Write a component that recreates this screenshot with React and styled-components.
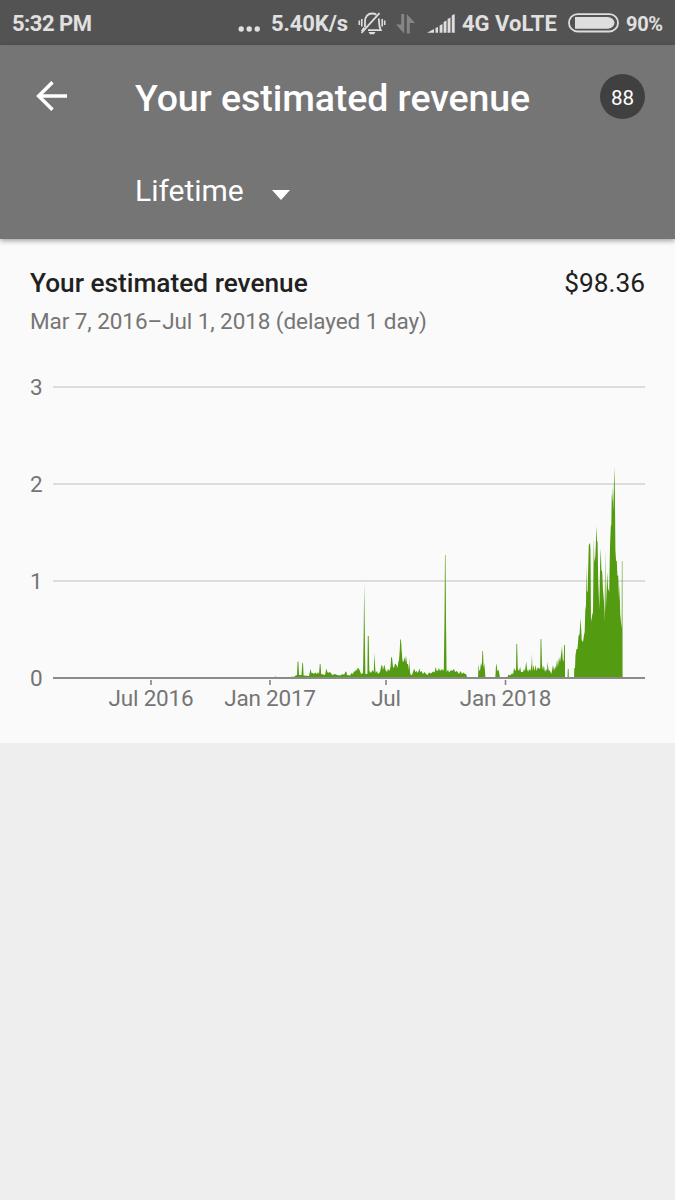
import React from 'react';
import styled, { createGlobalStyle } from 'styled-components';

const GlobalStyle = createGlobalStyle`
  * { box-sizing: border-box; }
  body { margin: 0; background: #eeeeee; font-family: Roboto, "Liberation Sans", sans-serif; }
`;

const Screen = styled.main`
  display: flex;
  flex-direction: column;
  width: 675px;
  height: 1200px;
  overflow: hidden;
  background: #eeeeee;
`;

const StatusBar = styled.div`
  display: flex;
  align-items: center;
  flex: none;
  height: 45px;
  padding: 2px 0 0 12px;
  background: #535353;
  color: #e0e0e0;
`;

const StatusText = styled.span`
  flex: none;
  font-size: ${(p) => p.$size || 22}px;
  font-weight: 700;
  line-height: 26px;
  letter-spacing: ${(p) => p.$track || 0}px;
  white-space: nowrap;
  margin-left: ${(p) => p.$gap || 0}px;
  width: ${(p) => p.$width}px;
`;

const StatusIcon = styled.svg`
  flex: none;
  display: block;
  height: 26px;
  width: ${(p) => p.$width}px;
  margin-left: ${(p) => p.$gap || 0}px;
`;

const AppBar = styled.header`
  flex: none;
  height: 194px;
  background: #757575;
  color: #fff;
  box-shadow: 0 2px 5px rgba(0, 0, 0, 0.35);
  z-index: 1;
`;

const TitleRow = styled.div`
  display: flex;
  align-items: center;
  height: 105px;
  padding: 0 30px 0 33px;
`;

const BackIcon = styled.svg`
  width: 38px;
  height: 38px;
  margin-top: -4px;
`;

const Title = styled.h1`
  flex: 1;
  margin: 1px 0 0 64px;
  font-size: 37.5px;
  line-height: 43px;
  letter-spacing: -0.08px;
  font-weight: 500;
  white-space: nowrap;
`;

const Badge = styled.div`
  display: flex;
  align-items: center;
  justify-content: center;
  width: 45px;
  height: 45px;
  padding-top: 2px;
  margin-top: -2px;
  border-radius: 50%;
  background: #404040;
  font-size: 20.6px;
`;

const PeriodPicker = styled.div`
  display: flex;
  align-items: center;
  height: 82px;
  padding-left: 135px;
  font-size: 30px;
  line-height: 36px;
`;

const Caret = styled.span`
  margin: 7px 0 0 28px;
  border: 9px solid transparent;
  border-top: 10px solid #fff;
  border-bottom: 0;
`;

const Card = styled.section`
  flex: none;
  height: 504px;
  background: #fafafa;
  padding-top: 28px;
`;

const CardHead = styled.div`
  display: flex;
  justify-content: space-between;
  padding: 0 30px;
  font-size: 26.25px;
  line-height: 32px;
  color: #212121;
`;

const CardTitle = styled.h2`
  margin: 0;
  font: inherit;
  font-weight: 500;
`;

const DateRange = styled.p`
  margin: 9px 30px 0;
  font-size: 22.5px;
  line-height: 27px;
  letter-spacing: -0.08px;
  color: #757575;
`;

const ChartSvg = styled.svg`
  display: block;
  margin-top: 15px;
  width: 675px;
  height: 380px;
`;

const AxisLabel = styled.text`
  font-size: 22.5px;
  letter-spacing: -0.2px;
  fill: #757575;
`;

const gridLines = [
  { y: 387, label: '3' },
  { y: 484, label: '2' },
  { y: 581, label: '1' },
];

const ticks = [
  { x: 151, label: 'Jul 2016' },
  { x: 270, label: 'Jan 2017' },
  { x: 386, label: 'Jul' },
  { x: 505.5, label: 'Jan 2018' },
];

const revenue = `
274,678 275,676.5 277,677 277.5,678 282,678 283,677 284,678 287,678 288,676.5 289,678 291,678 292,676 293,677.5 295,676 297,675 297.6,661.5 298.4,661.5 299,675
301.5,675 302.3,663 303,663 303.6,675.5 309,676 310.5,669 311.5,673 313,673 314,674 315,672.5 317,674
318,672 319,674 319.8,664 320.5,664 321.2,674 325,675 326.3,668.5 327,671 328,673 329.5,672 331,673
332,675 335,674 337,675 340,675.5 343,674 344,675 345.5,671.5 346.5,672 347,675 350,675.5 351.5,673 353,674
354,671 355,672 356,669 357,671 357.6,667.5 359,669 360,671 361,674 363,673 363.6,640 364.2,583 364.9,640 365.4,674
367.4,674 367.8,636 368.7,636 369.3,671 371,673 372.5,670 373.8,672 374.4,653 375,665 375.6,673 377,671 378,674 380,672
381,667 382,664.5 383,670 384.3,664.5 385.5,670 387,672 388,669 389.5,671 390.5,667 391.2,657 392,657.5 393,667
394,668 395,663.5 396.5,665 397.5,668 398.3,662 399,660 399.7,651 400.3,639 401,640 401.7,651 402.5,661 403.5,662
404.4,657 405.2,662 406,655.5 407,664 408,664 409,670 409.5,658 410,673 411,675 412,675 413,672 414.2,668.5 415.2,672
416.5,671 418,673 419.3,668.5 420.3,672 421.5,671 423,674 424.5,672 426,674 427.5,675 429,672.5 431,673.5 433,671.5
434.5,672.5 435.7,667 436.7,671 438,670.5 439,668 440,671 442,669 443.2,671 443.8,669 444.5,620 445,555 445.5,555 446,620 446.6,672
448,669.5 449,672.5 451,670 452,671 454,669 455,672 457,671 459,674 460.5,671 462,674 463.5,672.5 465,674 466,674 467.5,678
478,678 478.6,664 479.2,670 480,671 481,663 481.8,666 482.4,651 483,651 483.6,668 484.3,663 485.5,678
495.3,678 496,666 496.5,663.5 497.3,671 498.7,670 500,678
507,678 508.5,674.5 510,675.5 512,673.5 513.2,674 514,668 515,670 516,671 516.4,644 517.1,644 517.8,669 519,671
520.2,667 521,672 523,672 524,669 525,671 526.2,661.5 527,669 528.2,672 529,669 530.5,671 531.6,664 531.9,654 532.5,671
533.5,665 534.4,671 535.7,665 536.5,671 538,667 539,669 540.2,668 540.6,639 541.3,639 542,665 543,670 543.8,665.5 545,672
546.2,669 547,671 547.6,662 548.5,670 550,671 551.3,674 553,665 554,671 555.2,666 556,669 557,659.5 558,667 559,657 560,662
561,655 562,646.5 562.7,659 563.6,662 564.2,645 565,645 565,678 567.5,678 567.8,669 568.6,669 568.9,678
574,678 574.3,668 575,668 575.5,655 576.5,649 577.5,649 578.5,636 579.6,634 580.5,618 581.2,629 581.7,640 583,642 584,635 584.7,632
585.3,610 586,605 586.4,565 586.9,591 587.6,592 588.2,568 588.8,545 590,543 590.5,550 591,622 592.2,615 593,612 593.8,539
594.4,562 595.3,557 595.8,545 596.4,526 597,541 597.6,542 598.2,580 599.3,609 600.1,565 600.7,548 601.4,570 602.2,572
603,590 604,602 604.6,622 605.2,549 605.8,611 606.7,588 607.2,572 608,588 609.2,592 610,546 610.8,526 611.3,525 611.8,493
612.2,502 612.5,486 613.2,511 613.8,490 614.3,467 614.9,492 615.4,550 616.1,561 616.8,561 617.4,576 618.2,575 619.1,601
619.6,584 620.2,614 621.3,625 621.7,628 621.9,561 622.4,561 622.6,678`;

function Ellipsis() {
  return (
    <StatusIcon $width={23} viewBox="0 0 23 26" fill="#e0e0e0">
      <circle cx="3.2" cy="18" r="2.7" />
      <circle cx="11.2" cy="18" r="2.7" />
      <circle cx="19.2" cy="18" r="2.7" />
    </StatusIcon>
  );
}

function Bell() {
  return (
    <StatusIcon $width={28} $gap={10} viewBox="0 0 28 26" fill="none" stroke="#dedede" strokeWidth="1.8">
      <path d="M7 16V10.5C7 5.5 10 2.5 14 2.5C16 2.5 17.4 3 18.4 3.8M20.8 7.5C21.2 11 20.6 15 22.8 19.2H10M6.3 16.5L4.5 19.2H6" />
      <path d="M3.5 21.8L21.5 2.2" />
      <path d="M10.5 21H17.5L16 23.2H12Z" fill="#dedede" stroke="none" />
      <path d="M1.3 9.5V14M3.8 8V15.5M24.2 8V15.5M26.7 9.5V14" strokeWidth="1.6" />
    </StatusIcon>
  );
}

function Chart() {
  return (
    <ChartSvg viewBox="0 350 675 380">
      {gridLines.map((g) => (
        <g key={g.label}>
          <path d={`M53 ${g.y}H645`} stroke="#dcdcdc" strokeWidth="2" />
          <AxisLabel x="30" y={g.y + 8}>{g.label}</AxisLabel>
        </g>
      ))}
      <polygon points={revenue.trim()} fill="#539b10" />
      <path d="M53 678H645" stroke="#8b8b8b" strokeWidth="2" />
      <AxisLabel x="30" y="685.5">0</AxisLabel>
      {ticks.map((t) => (
        <g key={t.label}>
          <path d={`M${t.x} 680V685`} stroke="#858585" strokeWidth="1.6" />
          <AxisLabel x={t.x} y="706" textAnchor="middle">{t.label}</AxisLabel>
        </g>
      ))}
    </ChartSvg>
  );
}

export default function App() {
  return (
    <Screen>
      <GlobalStyle />
      <StatusBar>
        <StatusText $width={226} $track={-0.5}>5:32 PM</StatusText>
        <Ellipsis />
        <StatusText $gap={10} $width={77} $track={-0.1}>5.40K/s</StatusText>
        <Bell />
        <StatusIcon $width={20} $gap={10} viewBox="0 0 20 26" fill="#858585">
          <path d="M8.2 3V22.5L0 13.5H5.2V3Z" />
          <path d="M10.8 22.5V3L19 12H13.8V22.5Z" />
        </StatusIcon>
        <StatusIcon $width={28} $gap={11} viewBox="0 0 28 26" fill="#dedede">
          <path d="M0 21.8L7 18V21.8ZM8.5 17L11 16V21.8H8.5ZM12.6 14.5L15.5 13V21.8H12.6ZM16.6 11L19.5 9.5V21.8H16.6ZM20.6 8L23.5 6.5V21.8H20.6ZM24.8 4.5L27.7 3V21.8H24.8Z" />
        </StatusIcon>
        <StatusText $gap={7} $width={95}>4G VoLTE</StatusText>
        <StatusIcon $width={51} $gap={11} viewBox="0 0 51 26">
          <rect x="1" y="3.2" width="49" height="17.3" rx="8.6" fill="none" stroke="#dedede" strokeWidth="1.8" />
          <path d="M7 6H40Q46 7 46.5 11.8Q46 17 40 17.8H7Z" fill="#dedede" />
        </StatusIcon>
        <StatusText $gap={7} $size={20} $track={-0.3}>90%</StatusText>
      </StatusBar>
      <AppBar>
        <TitleRow>
          <BackIcon viewBox="0 0 38 38" fill="none" stroke="#fff" strokeWidth="3.6">
            <path d="M34 19H6M19.5 5.2L5.7 19L19.5 32.8" />
          </BackIcon>
          <Title>Your estimated revenue</Title>
          <Badge>88</Badge>
        </TitleRow>
        <PeriodPicker>
          Lifetime
          <Caret />
        </PeriodPicker>
      </AppBar>
      <Card>
        <CardHead>
          <CardTitle>Your estimated revenue</CardTitle>
          <span>$98.36</span>
        </CardHead>
        <DateRange>Mar 7, 2016–Jul 1, 2018 (delayed 1 day)</DateRange>
        <Chart />
      </Card>
    </Screen>
  );
}
